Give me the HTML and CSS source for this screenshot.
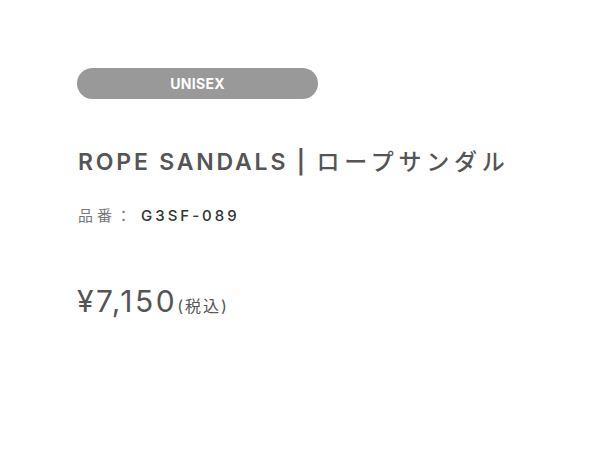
FILE: index.html
```html
<!DOCTYPE html>
<html lang="ja">
<head>
<meta charset="utf-8">
<link rel="stylesheet" href="styles.css">
</head>
<body>
<div class="product">
  <div class="badge">UNISEX</div>
  <h1 class="title">ROPE SANDALS | <span class="title-ja">ロープサンダル</span></h1>
  <p class="code"><span class="code-label">品番：</span><span class="code-value">G3SF-089</span></p>
  <p class="price"><span class="price-value">¥7,150</span><span class="tax">(税込)</span></p>
</div>
</body>
</html>
```
FILE: styles.css
```css
html, body {
  margin: 0;
  padding: 0;
  background: #fff;
}
body {
  font-family: Inter, "Noto Sans CJK JP", sans-serif;
  color: #555;
}
.product {
  padding: 68px 0 0 77px;
  display: flex;
  flex-direction: column;
  align-items: flex-start;
}
.badge {
  width: 241px;
  height: 31px;
  border-radius: 16px;
  background: #999;
  color: #fff;
  font-weight: 700;
  font-size: 14px;
  display: flex;
  align-items: center;
  justify-content: center;
  letter-spacing: 0.3px;
}
.title {
  margin: 48px 0 0 1px;
  font-size: 23px;
  font-weight: 600;
  letter-spacing: 2.8px;
  line-height: 30px;
  color: #555;
}
.title-ja {
  font-weight: 500;
  letter-spacing: 4.8px;
}
.code {
  margin: 29px 0 0 1px;
  font-size: 15px;
  line-height: 20px;
}
.code-label {
  color: #777;
  letter-spacing: 4px;
  margin-right: 6px;
}
.code-value {
  color: #333;
  font-weight: 500;
  letter-spacing: 3px;
}
.price {
  margin: 55px 0 0 0;
  line-height: 40px;
  color: #555;
}
.price-value {
  font-size: 30px;
  font-weight: 400;
  letter-spacing: 2.5px;
}
.tax {
  font-size: 16px;
  letter-spacing: 2px;
}
```
